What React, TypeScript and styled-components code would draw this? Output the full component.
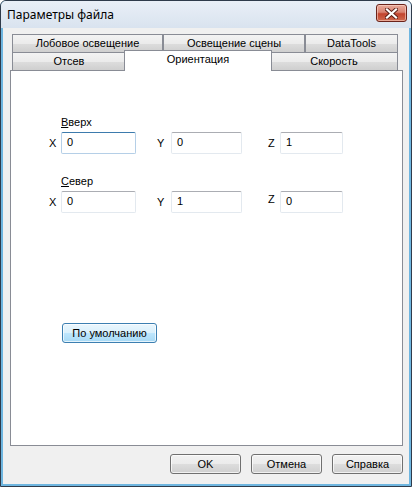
import React from "react";
import styled, { createGlobalStyle, css } from "styled-components";

const GlobalStyle = createGlobalStyle`
  html, body { margin: 0; padding: 0; background: #ffffff; }
  body { width: 412px; height: 487px; overflow: hidden; }
  * { box-sizing: border-box; }
`;

const Window = styled.div`
  width: 412px;
  height: 487px;
  border: 1px solid #2f3b4b;
  border-radius: 6px 6px 0 0;
  overflow: hidden;
  display: flex;
  flex-direction: column;
  background: #6fb6e0;
  font-family: "Liberation Sans", Arial, sans-serif;
  font-size: 11px;
  color: #000;
`;

const TitleBar = styled.div`
  height: 27px;
  flex: none;
  display: flex;
  align-items: center;
  padding: 0 4px 0 6px;
  background: linear-gradient(#e9eff7, #d9e3ef);
`;

const TitleText = styled.div`
  font-family: "Noto Sans", "Open Sans", sans-serif;
  font-size: 12px;
  color: #000;
  flex: 1;
`;

const CloseButton = styled.div`
  width: 31px;
  height: 18px;
  margin-top: -3px;
  border: 1px solid #6b231b;
  border-radius: 3px;
  background: linear-gradient(#e9aa9b 0%, #d98372 45%, #c2432d 55%, #cf6a4f 100%);
  box-shadow: inset 0 0 0 1px rgba(255, 220, 210, 0.55);
  display: flex;
  align-items: center;
  justify-content: center;
`;

const ClientFrame = styled.div`
  flex: 1;
  display: flex;
  padding: 0 2px 2px 2px;
`;

const Client = styled.div`
  flex: 1;
  background: #f0f0f0;
  display: flex;
  flex-direction: column;
  padding: 6px 6px 8px 7px;
`;

const TabControl = styled.div`
  display: flex;
  flex-direction: column;
  height: 412px;
`;

const TabRow = styled.div<{ $front?: boolean }>`
  display: flex;
  height: 18px;
  padding-left: 2px;
  position: relative;
  z-index: ${(p) => (p.$front ? 2 : 1)};
`;

const Tab = styled.div<{ $w: number; $selected?: boolean }>`
  width: ${(p) => p.$w}px;
  flex: none;
  height: 18px;
  border: 1px solid #898c95;
  border-bottom: none;
  background: linear-gradient(#f3f3f3 0%, #ebebeb 50%, #dddddd 51%, #cfcfcf 100%);
  display: flex;
  align-items: center;
  justify-content: center;
  padding-bottom: 1px;
  white-space: nowrap;
  ${(p) =>
    p.$selected &&
    css`
      height: 21px;
      margin: -2px -2px 0 -2px;
      background: #ffffff;
      position: relative;
      z-index: 3;
      padding-bottom: 4px;
    `}
`;

const Panel = styled.div`
  flex: 1;
  width: 393px;
  background: #ffffff;
  border: 1px solid #898c95;
  display: flex;
  flex-direction: column;
  padding: 45px 0 0 38px;
  position: relative;
  z-index: 1;
`;

const FieldGrid = styled.div`
  display: grid;
  grid-template-columns: 12px 75px 21px 14px 71px 26px 12px 63px;
  align-items: center;
`;

const GroupLabel = styled.div<{ $top: number }>`
  grid-column: 2 / -1;
  height: 13px;
  line-height: 13px;
  margin-top: ${(p) => p.$top}px;
  margin-bottom: 3px;
`;

const Accel = styled.span`
  text-decoration: underline;
`;

const AxisLabel = styled.div<{ $raise?: number }>`
  grid-column: auto;
  line-height: 13px;
  position: relative;
  top: ${(p) => -(p.$raise ?? 0)}px;
`;

const Gap = styled.div``;

const Input = styled.div<{ $focused?: boolean }>`
  height: 22px;
  background: #ffffff;
  border: 1px solid #e3e9ef;
  border-top-color: #abadb3;
  border-radius: 2px;
  padding: 3px 0 0 5px;
  line-height: 13px;
  ${(p) =>
    p.$focused &&
    css`
      border-color: #b5cfe7;
      border-top-color: #3d7bad;
    `}
`;

const Spacer = styled.div`
  flex: 1;
`;

const Button = styled.div<{ $w: number; $default?: boolean }>`
  width: ${(p) => p.$w}px;
  height: 20px;
  border: 1px solid #707070;
  border-radius: 3px;
  background: linear-gradient(#f2f2f2 0%, #ebebeb 50%, #dddddd 51%, #cfcfcf 100%);
  box-shadow: inset 0 0 0 1px rgba(255, 255, 255, 0.7);
  display: flex;
  align-items: center;
  justify-content: center;
  padding-bottom: 1px;
  ${(p) =>
    p.$default &&
    css`
      border-color: #3c7fb1;
      background: linear-gradient(#eaf6fd 0%, #d9f0fc 50%, #bee6fd 51%, #a7d9f5 100%);
    `}
`;

const DefaultButtonWrap = styled.div`
  margin-top: 110px;
  margin-left: 13px;
`;

const ButtonBar = styled.div`
  display: flex;
  justify-content: flex-end;
  gap: 10px;
  margin-top: 8px;
`;

export default function App() {
  return (
    <>
      <GlobalStyle />
      <Window>
        <TitleBar>
          <TitleText>Параметры файла</TitleText>
          <CloseButton>
            <svg width="13" height="11" viewBox="0 0 13 11">
              <path
                d="M2 1.5 L11 9.5 M11 1.5 L2 9.5"
                stroke="#5a1e16"
                strokeWidth="4"
                strokeLinecap="square"
              />
              <path
                d="M2 1.5 L11 9.5 M11 1.5 L2 9.5"
                stroke="#ffffff"
                strokeWidth="2.2"
                strokeLinecap="square"
              />
            </svg>
          </CloseButton>
        </TitleBar>
        <ClientFrame>
          <Client>
            <TabControl>
              <TabRow>
                <Tab $w={151}>Лобовое освещение</Tab>
                <Tab $w={142}>Освещение сцены</Tab>
                <Tab $w={93}>DataTools</Tab>
              </TabRow>
              <TabRow $front>
                <Tab $w={114}>Отсев</Tab>
                <Tab $w={148} $selected>
                  Ориентация
                </Tab>
                <Tab $w={128}>Скорость</Tab>
              </TabRow>
              <Panel>
                <FieldGrid>
                  <GroupLabel $top={0}>
                    <Accel>В</Accel>верх
                  </GroupLabel>
                  <AxisLabel>X</AxisLabel>
                  <Input $focused>0</Input>
                  <Gap />
                  <AxisLabel>Y</AxisLabel>
                  <Input>0</Input>
                  <Gap />
                  <AxisLabel>Z</AxisLabel>
                  <Input>1</Input>

                  <GroupLabel $top={21}>
                    <Accel>С</Accel>евер
                  </GroupLabel>
                  <AxisLabel>X</AxisLabel>
                  <Input>0</Input>
                  <Gap />
                  <AxisLabel>Y</AxisLabel>
                  <Input>1</Input>
                  <Gap />
                  <AxisLabel $raise={3}>Z</AxisLabel>
                  <Input>0</Input>
                </FieldGrid>
                <DefaultButtonWrap>
                  <Button $w={95} $default>
                    По умолчанию
                  </Button>
                </DefaultButtonWrap>
              </Panel>
            </TabControl>
            <ButtonBar>
              <Button $w={71}>OK</Button>
              <Button $w={71}>Отмена</Button>
              <Button $w={71}>Справка</Button>
            </ButtonBar>
            <Spacer />
          </Client>
        </ClientFrame>
      </Window>
    </>
  );
}
